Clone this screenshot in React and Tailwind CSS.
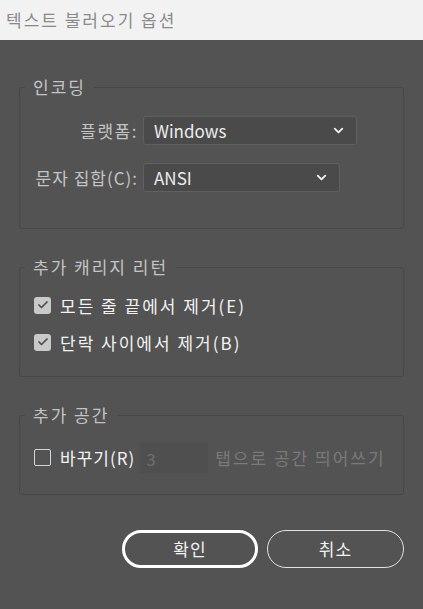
import { Check, ChevronDown } from "lucide-react";

const font = { fontFamily: '"Noto Sans CJK KR", "Noto Sans", sans-serif' };

const Select = ({ value, width }) => (
  <div
    className={`flex items-center justify-between h-[29px] pl-[10px] pr-[10px] bg-[#4a4a4a] border border-[#606060] rounded-[3px] text-[17px] leading-none text-[#ececec] ${width}`}
  >
    <span>{value}</span>
    <ChevronDown size={15} strokeWidth={3} className="text-[#f0f0f0]" />
  </div>
);

const CheckRow = ({ label, checked, tracking = "tracking-[2px]" }) => (
  <div className="flex items-center h-[22px] gap-[9px]">
    {checked ? (
      <span className="w-[17px] h-[17px] rounded-[3px] bg-[#c9c9c9] flex items-center justify-center">
        <Check size={12} strokeWidth={3.5} className="text-[#4d4d4d]" />
      </span>
    ) : (
      <span className="w-[17px] h-[17px] rounded-[2px] border border-[#d6d6d6]" />
    )}
    <span className={`text-[17px] leading-none text-[#f2f2f2] whitespace-nowrap ${tracking}`}>{label}</span>
  </div>
);

const Group = ({ title, className, children }) => (
  <fieldset className={`mx-[19px] border border-[#474747] rounded-[3px] pl-[5px] pr-[14px] ${className}`}>
    <legend className="px-[8px] text-[17px] leading-[22px] tracking-[2px] text-[#c4c4c4]">{title}</legend>
    <div className="pl-[9px]">{children}</div>
  </fieldset>
);

export default function App() {
  return (
    <div className="w-[423px] h-[609px] bg-[#535353] flex flex-col" style={font}>
      <div className="h-[40px] bg-[#f2f2f2] flex items-center px-[6px] text-[17px] tracking-[2px] text-[#8a8a8a]">
        텍스트 불러오기 옵션
      </div>

      <Group title="인코딩" className="mt-[36px] pt-[18px] pb-[36px]">
        <div className="grid grid-cols-[104px_auto] gap-x-[5px] gap-y-[18px] items-center">
          <span className="text-right text-[17px] leading-none tracking-[1.5px] text-[#c4c4c4]">플랫폼:</span>
          <Select value="Windows" width="w-[214px]" />
          <span className="text-right text-[17px] leading-none tracking-[1px] text-[#c4c4c4] whitespace-nowrap">
            문자 집합(C):
          </span>
          <Select value="ANSI" width="w-[197px]" />
        </div>
      </Group>

      <Group title="추가 캐리지 리턴" className="mt-[27px] pt-[16px] pb-[23px]">
        <div className="flex flex-col gap-[15px]">
          <CheckRow label="모든 줄 끝에서 제거(E)" checked />
          <CheckRow label="단락 사이에서 제거(B)" checked />
        </div>
      </Group>

      <Group title="추가 공간" className="mt-[27px] pt-[16px] pb-[21px]">
        <div className="flex items-center h-[31px]">
          <CheckRow label="바꾸기(R)" tracking="tracking-[1px]" />
          <div className="ml-[5px] w-[68px] h-[31px] bg-[#4f4f4f] flex items-end pl-[6px] pb-[2px] text-[17px] leading-[24px] text-[#6e6e6e]">
            3
          </div>
          <span className="ml-[7px] text-[17px] leading-none tracking-[2px] text-[#7a7a7a] whitespace-nowrap">
            탭으로 공간 띄어쓰기
          </span>
        </div>
      </Group>

      <div className="flex justify-end gap-[9px] mt-[35px] pr-[19px]">
        <button className="w-[136px] h-[38px] rounded-full border-[3px] border-white text-[17px] tracking-[1px] text-[#f2f2f2]">
          확인
        </button>
        <button className="w-[137px] h-[38px] rounded-full border-[1.5px] border-[#e2e2e2] text-[17px] tracking-[1px] text-[#f2f2f2]">
          취소
        </button>
      </div>
    </div>
  );
}
